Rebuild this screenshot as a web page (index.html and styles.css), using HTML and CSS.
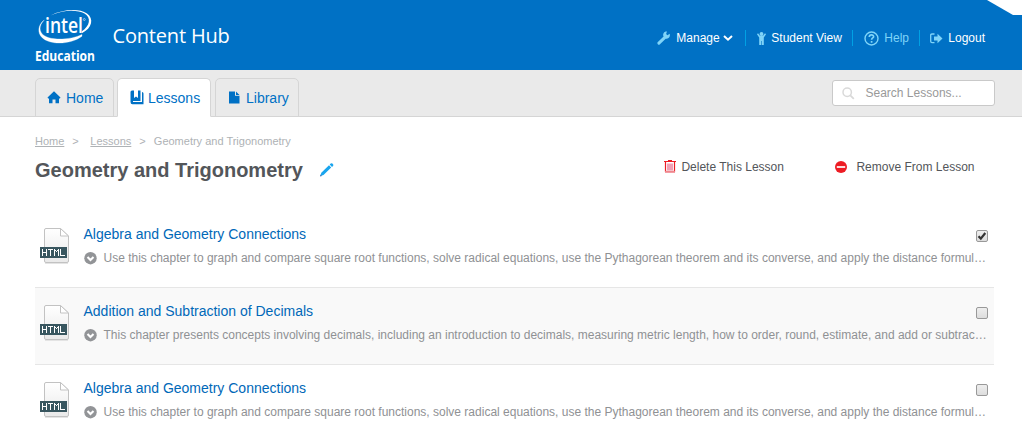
FILE: index.html
```
<!DOCTYPE html>
<html lang="en">
<head>
<meta charset="utf-8">
<title>Content Hub - Geometry and Trigonometry</title>
<link rel="stylesheet" href="styles.css">
</head>
<body>
<svg class="defs" width="0" height="0" aria-hidden="true">
  <defs>
    <linearGradient id="paper" x1="0" y1="0" x2="0" y2="1"><stop offset="0" stop-color="#fff"/><stop offset="1" stop-color="#e9e9e9"/></linearGradient>
    <symbol id="html-file" viewBox="0 0 30 38">
      <path d="M6 2.500h14.500l8 7.500v25a1.500 1.500 0 0 1-1.500 1.500H6A1.500 1.500 0 0 1 4.500 35V4A1.500 1.500 0 0 1 6 2.500z" fill="url(#paper)" stroke="#c2c2c2"/>
      <path d="M20.500 2.500V10h8z" fill="#fff" stroke="#c2c2c2"/>
      <path d="M5 37.500h23" stroke="#e4e4e4"/>
      <rect x="0" y="21" width="27" height="11" fill="#38565f"/>
      <path d="M2.500 23v7M6.500 23v7M3 26.500h3M8 23.500h5M10.500 24v6M14.500 30v-7M18.500 30v-7M15 24.500h1M17 24.500h1M16 25.500h1M20.500 23v7M21 29.500h4" fill="none" stroke="#fff"/>
    </symbol>
    <symbol id="expand" viewBox="0 0 13 13">
      <circle cx="6.500" cy="6.200" r="6.200" fill="#929497"/>
      <path d="M3.500 4.900l3 3 3-3" fill="none" stroke="#fff" stroke-width="2.100"/>
    </symbol>
  </defs>
</svg>

<header class="header">
  <svg class="corner" width="35" height="15" viewBox="0 0 35 15"><path d="M0 0h35v15h-9z" fill="#fff"/></svg>
  <div class="brand">
    <svg class="logo" width="64" height="62" viewBox="0 0 64 62">
      <path d="M15.500 8.500C27 3 42 2.300 49.500 6.500c7 4.200 5.500 12.500-2.700 17.800v1.900C57.500 21 59 11.500 52 6.500 44 1 27 2.500 15.500 8.500z" fill="#fff"/>
      <path d="M9.300 13C3 17.500 1.800 26 7.500 31c8.500 7.500 29 6.300 39.500-1.800v-1.700C36 33 16.500 33.800 9 28.500 3.500 24.500 4 18 9.300 13z" fill="#fff" stroke="#fff" stroke-width=".3"/>
      <text class="logo-intel" x="10" y="26" textLength="38" lengthAdjust="spacingAndGlyphs">intel</text>
      <circle cx="49.300" cy="12.500" r="1" fill="none" stroke="#fff" stroke-width=".5"/>
      <text class="logo-edu" x="0" y="54" textLength="60" lengthAdjust="spacingAndGlyphs">Education</text>
    </svg>
    <span class="product">Content Hub</span>
  </div>
  <nav class="tools">
    <a class="tool manage"><svg width="14" height="14" viewBox="0 0 14 14"><path d="M1.900 12.100l6-5.800" stroke="#7fd4f8" stroke-width="3" stroke-linecap="round"/><path d="M12.700 2.800l-2.300 1.400-1.300-1.300.9-2.300C7.300.2 5.500 2.700 6.400 5.300l2.200 2.200c2.600.8 5-1.300 4.100-4.700z" fill="#7fd4f8"/></svg><span>Manage</span><svg class="caret" width="10" height="8" viewBox="0 0 10 8"><path d="M1 2l4 3.700L9 2" fill="none" stroke="#fff" stroke-width="2"/></svg></a>
    <a class="tool student"><svg width="9" height="13" viewBox="0 0 9 13"><circle cx="4.500" cy="2" r="1.900" fill="#7fd4f8"/><path d="M0 2.300L1 1.300l2 2.500h3l2-2.500 1 1-2.200 3.200V13H2.200V5.500z" fill="#7fd4f8"/><path d="M4.500 9v4" stroke="#0071c5" stroke-width=".6"/></svg><span>Student View</span></a>
    <a class="tool help"><svg width="15" height="15" viewBox="0 0 15 15"><circle cx="7.500" cy="7.500" r="6.500" fill="none" stroke="#7fd4f8" stroke-width="1.400"/><path d="M5.300 6c0-3 4.500-2.700 4.300-.3C9.500 7 7.600 7 7.600 8.800M7.600 10v1.700" fill="none" stroke="#7fd4f8" stroke-width="1.700"/></svg><span>Help</span></a>
    <a class="tool logout"><svg width="13" height="11" viewBox="0 0 13 11"><path d="M4.500 1H2Q.7 1 .7 2.300v6Q.7 9.700 2 9.700h2.500" fill="none" stroke="#7fd4f8" stroke-width="1.300"/><path d="M4 3.500h3.500V.8L12.500 5.500l-5 4.700V7.500H4z" fill="#7fd4f8"/></svg><span>Logout</span></a>
  </nav>
</header>

<div class="navbar">
  <nav class="tabs">
    <a class="tab tab-home"><svg width="14" height="13" viewBox="0 0 14 13"><path d="M7 .3L13.500 6.600l-.6.8H12V12.300H8.500V8.500h-3v3.800H2V7.400H1.100L.5 6.600z" fill="#0071c5"/></svg><span>Home</span></a>
    <a class="tab tab-lessons active"><svg width="14" height="16" viewBox="0 0 14 16"><path d="M2 .5h2V8l2-1.500L8 8V.5h2.500V11H3v1h9V2q1.500 0 1.500 1.500V14.300H2.500Q.5 14.300.5 12V2Q.5.5 2 .5z" fill="#0071c5"/></svg><span>Lessons</span></a>
    <a class="tab tab-library"><svg width="11" height="14" viewBox="0 0 11 14"><path d="M0 .5h6v4.300h4.500v7.700H0zM7 .5l3.500 3.400H7z" fill="#0071c5"/></svg><span>Library</span></a>
  </nav>
  <div class="search"><svg width="13" height="13" viewBox="0 0 13 13"><circle cx="5.200" cy="5.200" r="4.200" fill="none" stroke="#d9d9d9" stroke-width="1.500"/><path d="M8.300 8.300l3.500 3.500" stroke="#d9d9d9" stroke-width="1.800"/></svg><span>Search Lessons...</span></div>
</div>

<main class="main">
  <div class="crumbs"><a>Home</a><i>&gt;</i><a>Lessons</a><i class="last">&gt;</i><span>Geometry and Trigonometry</span></div>
  <div class="heading">
    <h1>Geometry and Trigonometry</h1>
    <svg class="pencil" width="14" height="14" viewBox="0 0 14 14"><path d="M.3 13l1-3.300L9 2.300l2.200 2.200L3.500 12zM9.700 1.600l1-1q.9-.8 1.700 0l.6.6q.8.8 0 1.700l-1 1z" fill="#19a5ee"/><path d="M0 13.500l.5-2 1.500 1.500z" fill="#3973b8"/></svg>
    <div class="actions">
      <a class="action delete"><svg width="12" height="14" viewBox="0 0 12 14"><path d="M0 1.500h12M4 .5h4M1.500 2v10M10.500 2v10" fill="none" stroke="#ed1c24" stroke-width="1.200"/><path d="M4 3.500v7M6 3.500v7M8 3.500v7" stroke="#e0406a"/><path d="M1 11.800h10" stroke="#f0858c" stroke-width="2"/></svg><span>Delete This Lesson</span></a>
      <a class="action remove"><svg width="12" height="12" viewBox="0 0 12 12"><circle cx="6" cy="6" r="6" fill="#ed1c24"/><path d="M1.800 6h8.400" stroke="#fff" stroke-width="1.700"/></svg><span>Remove From Lesson</span></a>
    </div>
  </div>

  <div class="list">
    <article class="row">
      <svg class="file" width="30" height="38"><use href="#html-file"/></svg>
      <div class="info"><h2>Algebra and Geometry Connections</h2>
        <div class="desc"><svg width="13" height="13"><use href="#expand"/></svg><p>Use this chapter to graph and compare square root functions, solve radical equations, use the Pythagorean theorem and its converse, and apply the distance formul…</p></div></div>
      <span class="check"><svg width="10" height="10" viewBox="0 0 10 10"><path d="M1.500 5.300l2.300 2.300L8.300 2" fill="none" stroke="#333" stroke-width="2.200"/></svg></span>
    </article>
    <article class="row alt">
      <svg class="file" width="30" height="38"><use href="#html-file"/></svg>
      <div class="info"><h2>Addition and Subtraction of Decimals</h2>
        <div class="desc"><svg width="13" height="13"><use href="#expand"/></svg><p>This chapter presents concepts involving decimals, including an introduction to decimals, measuring metric length, how to order, round, estimate, and add or subtrac…</p></div></div>
      <span class="check"></span>
    </article>
    <article class="row">
      <svg class="file" width="30" height="38"><use href="#html-file"/></svg>
      <div class="info"><h2>Algebra and Geometry Connections</h2>
        <div class="desc"><svg width="13" height="13"><use href="#expand"/></svg><p>Use this chapter to graph and compare square root functions, solve radical equations, use the Pythagorean theorem and its converse, and apply the distance formul…</p></div></div>
      <span class="check"></span>
    </article>
  </div>
</main>
</body>
</html>
```
FILE: styles.css
```
* { box-sizing: border-box; }
body { margin: 0; height: 440px; overflow: hidden; background: #fff; font: 12px/16px "Liberation Sans", Arial, sans-serif; color: #53565a; }
svg { display: block; flex: none; }
.defs { position: absolute; }
span, p, h1, h2 { white-space: nowrap; }

.header { position: relative; display: flex; justify-content: space-between; height: 70px; padding: 7px 37px 0 35px; background: #0071c5; color: #fff; }
.corner { position: absolute; top: 0; right: 0; }
.brand { display: flex; }
.logo { overflow: visible; }
.logo-intel { font: 600 21px "Open Sans", sans-serif; fill: #fff; }
.logo-edu { font: 700 13.500px "Open Sans", sans-serif; fill: #fff; }
.product { margin: 16px 0 0 13.500px; font: 20px/26px "Open Sans", sans-serif; letter-spacing: -.18px; }
.tools { display: flex; align-items: center; height: 16px; margin-top: 23px; }
.tool { display: flex; align-items: center; height: 16px; }
.tool + .tool { border-left: 1px solid #00a1e4; }
.manage { width: 88px; }
.manage span { margin-left: 5px; }
.caret { margin-left: 3px; }
.student { width: 107px; padding-left: 11px; }
.student span { margin-left: 5px; }
.help { width: 67px; padding-left: 11px; color: #7fd4f8; }
.help span { margin-left: 5px; }
.logout { padding-left: 10px; }
.logout span { margin-left: 5px; }

.navbar { display: flex; justify-content: space-between; height: 47px; padding: 8px 27px 0 35px; background: #eaeaea; border-bottom: 1px solid #d5d5d5; }
.tabs { display: flex; gap: 4px; height: 39px; }
.tab { display: flex; align-items: center; height: 39px; border: 1px solid #d5d5d5; border-radius: 5px 5px 0 0; color: #0071c5; font-size: 14px; }
.tab-home { width: 79px; padding-left: 11px; gap: 5px; }
.tab-lessons { width: 94px; padding-left: 12px; gap: 4px; margin-left: -1px; }
.tab-library { width: 84px; padding-left: 13px; gap: 6px; }
.tab.active { background: #fff; border-bottom-color: #fff; }
.search { display: flex; align-items: center; width: 163px; height: 26px; margin-top: 2px; padding-left: 9px; gap: 10.500px; background: #fff; border: 1px solid #c9c9c9; border-radius: 3px; color: #999; }

.main { padding: 17px 28px 0 35px; }
.crumbs { display: flex; font-size: 11px; line-height: 14px; color: #aeb2b5; }
.crumbs a { text-decoration: underline; }
.crumbs i { width: 26px; padding-left: 8px; font-style: normal; }
.crumbs .last { width: 22.500px; }
.heading { display: flex; height: 62px; padding-top: 9px; }
h1 { margin: 0; font-size: 20px; line-height: 26px; color: #53565a; }
.pencil { margin: 6px 0 0 17px; }
.actions { display: flex; margin: 2px 19.500px 0 auto; }
.action { display: flex; align-items: center; height: 16px; }
.delete { gap: 5.500px; }
.remove { gap: 9.500px; margin-left: 51px; }

.row { display: flex; height: 77px; padding: 15px 0 0 5px; }
.row:first-child { padding-top: 16px; }
.row + .row { border-top: 1px solid #e6e6e6; }
.alt { background: #f9f9f9; }
.info { flex: 1; min-width: 0; padding-left: 13.500px; }
h2 { margin: 0; font-size: 14px; font-weight: 400; line-height: 16px; color: #0068b8; }
.desc { display: flex; align-items: center; margin-top: 8px; gap: 7px; color: #8f9194; }
.desc p { margin: 0; }
.check { flex: none; width: 12px; height: 12px; margin: 4px 6px 0 -20px; border: 1px solid #999; border-radius: 2px; background: linear-gradient(#eee, #ddd); }
```
